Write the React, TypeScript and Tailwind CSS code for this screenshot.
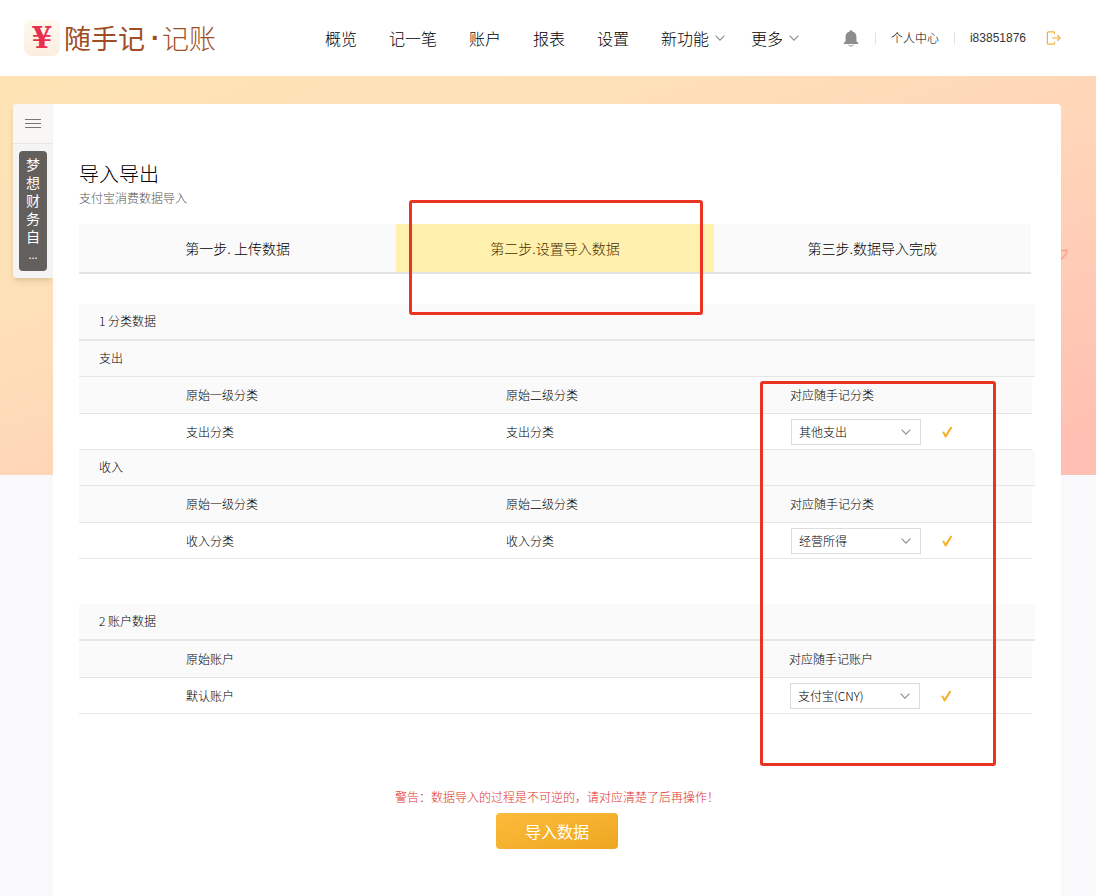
import { useState } from "react";
import type { ReactNode } from "react";

interface NavItem {
  label: string;
  more?: boolean;
}

const navItems: NavItem[] = [
  { label: "概览" },
  { label: "记一笔" },
  { label: "账户" },
  { label: "报表" },
  { label: "设置" },
  { label: "新功能", more: true },
  { label: "更多", more: true },
];

const steps = ["第一步. 上传数据", "第二步.设置导入数据", "第三步.数据导入完成"];
const activeStep = 1;

function Chevron({ className }: { className?: string }) {
  return (
    <svg viewBox="0 0 10 6" className={className} fill="none" stroke="#8c8c8c" strokeWidth="1.1" aria-hidden="true">
      <path d="M0.6 0.7 5 5.1 9.4 0.7" />
    </svg>
  );
}

function CheckMark() {
  return (
    <svg viewBox="0 0 12 12" className="h-3 w-3" aria-hidden="true">
      <path d="M1.2 6 3 5.4 4.6 8.2 9.6 0.6 11 0.9 10.8 2.4 5.2 11.4 4 11.6Z" fill="#f5b12c" />
    </svg>
  );
}

function Header() {
  return (
    <header className="flex h-[76px] shrink-0 items-center bg-white pl-6 pr-[35px]">
      <a href="#" className="flex h-9 w-[301px] items-center whitespace-nowrap">
        <span className="flex h-9 w-9 items-center justify-center rounded-lg bg-gradient-to-b from-[#fff9f0] to-[#fbeee0] font-['DejaVu_Serif',serif] text-[30px] leading-9 font-bold text-[#e8304c]">
          ¥
        </span>
        <span className="ml-1 text-[27px] leading-9 font-normal text-[#a04f24]">随手记</span>
        <span className="ml-1.5 font-['Liberation_Sans',sans-serif] text-[27px] leading-9 font-bold text-[#a04f24]">·</span>
        <span className="ml-0.5 text-[27px] leading-9 font-light text-[#a04f24]">记账</span>
      </a>

      <nav className="flex items-center gap-8 whitespace-nowrap">
        {navItems.map((item) => (
          <a key={item.label} href="#" className="flex items-center text-base">
            {item.label}
            {item.more && <Chevron className="-mr-1.5 ml-1.5 h-1.5 w-2.5" />}
          </a>
        ))}
      </nav>

      <div className="ml-auto flex items-center whitespace-nowrap text-xs">
        <button type="button" aria-label="消息" className="mr-4">
          <svg viewBox="0 0 16 17" className="h-[17px] w-4" aria-hidden="true">
            <path
              d="M8 0.3c-.8 0-1.3.5-1.4 1.1C4 2 2.6 4 2.6 6.6v3.6c0 1.2-.7 1.9-1.7 2.6-.5.4-.4 1.1.3 1.1h13.6c.7 0 .8-.7.3-1.1-1-.7-1.7-1.4-1.7-2.6V6.6C13.4 4 12 2 9.4 1.4 9.3.8 8.8.3 8 .3Z"
              fill="#8d8d8d"
            />
            <path d="M5.4 14.6a2.7 2 0 0 0 5.2 0" fill="none" stroke="#8d8d8d" strokeWidth="1" />
          </svg>
        </button>
        <a href="#" className="border-x border-[#e2e2e2] px-[15px] leading-3">
          个人中心
        </a>
        <a href="#" className="ml-[15px] font-['Liberation_Sans',sans-serif] text-[#333]">
          i83851876
        </a>
        <button type="button" aria-label="退出" className="ml-5">
          <svg viewBox="0 0 15 14" className="h-3.5 w-[15px]" fill="none" stroke="#f0b23c" strokeWidth="1.2" aria-hidden="true">
            <path d="M8.5 3.2V1.7a.9.9 0 0 0-.9-.9H2.3a.9.9 0 0 0-.9.9v10.6c0 .5.4.9.9.9h5.3c.5 0 .9-.4.9-.9v-1.5" />
            <path d="M6 7h8.2M11.2 4.2 14.2 7l-3 2.8" />
          </svg>
        </button>
      </div>
    </header>
  );
}

function SideBar() {
  return (
    <aside className="flex w-10 shrink-0 flex-col self-start rounded-l bg-[#f4f4f4] shadow-md">
      <button
        type="button"
        aria-label="菜单"
        className="flex h-10 flex-col items-center justify-center gap-[3px] rounded-tl border-b border-[#e6e6e6] bg-[#f8f7f6]"
      >
        <span className="h-px w-4 bg-[#777]" />
        <span className="h-px w-4 bg-[#777]" />
        <span className="h-px w-4 bg-[#777]" />
      </button>
      <div className="px-1.5 py-[7px]">
        <p className="flex h-[120px] flex-col items-center rounded-sm bg-[#635f5d] pt-1 text-sm leading-[18px] font-normal text-white">
          {"梦想财务自".split("").map((char) => (
            <span key={char}>{char}</span>
          ))}
          <span className="text-[11px]">...</span>
        </p>
      </div>
    </aside>
  );
}

function SectionTitle({ children }: { children: ReactNode }) {
  return <h2 className="h-[37px] border-b-2 border-[#e6e6e6] bg-[#fafafa] pl-5 leading-[34px]">{children}</h2>;
}

function GroupTitle({ children }: { children: ReactNode }) {
  return <h3 className="h-9 border-b border-[#e6e6e6] bg-[#fafafa] pl-5 leading-[34px]">{children}</h3>;
}

interface MappingTableProps {
  headers: string[];
  cells: string[];
  target: string;
  options: string[];
}

function MappingTable({ headers, cells, target, options }: MappingTableProps) {
  const [value, setValue] = useState(options[0]);
  const wide = headers.length === 1;

  return (
    <div className="pr-[3px]">
      <table className="w-full table-fixed border-separate border-spacing-0 text-left">
        <thead>
          <tr className="h-[37px] bg-[#fafafa]">
            {headers.map((header, i) => (
              <th
                key={header}
                className={`border-b border-[#e6e6e6] p-0 font-light ${
                  wide ? "w-[710px] pl-[107px]" : i === 0 ? "w-[427px] pl-[107px]" : "w-[284px]"
                }`}
              >
                {header}
              </th>
            ))}
            <th className="border-b border-[#e6e6e6] p-0 font-light">{target}</th>
          </tr>
        </thead>
        <tbody>
          <tr className="h-9">
            {cells.map((cell, i) => (
              <td key={i} className={i === 0 ? "border-b border-[#e6e6e6] pl-[107px]" : "border-b border-[#e6e6e6]"}>
                {cell}
              </td>
            ))}
            <td className="border-b border-[#e6e6e6] pl-px">
              <div className="flex items-center gap-5">
                <div className="relative">
                  <select
                    aria-label={target}
                    value={value}
                    onChange={(e) => setValue(e.target.value)}
                    className="block h-[26px] w-[130px] appearance-none border border-[#dcdcdc] bg-white px-[7px]"
                  >
                    {options.map((option) => (
                      <option key={option}>{option}</option>
                    ))}
                  </select>
                  <Chevron className="pointer-events-none absolute top-2.5 right-2.5 h-1.5 w-2.5" />
                </div>
                <CheckMark />
              </div>
            </td>
          </tr>
        </tbody>
      </table>
    </div>
  );
}

export default function App() {
  return (
    <div className="flex min-h-screen flex-col bg-[#f9f9fc] font-['Noto_Sans_CJK_SC',sans-serif] font-light text-black">
      <Header />

      <main className="relative flex flex-1 bg-[linear-gradient(160deg,#fee4b5_0%,#fee0b8_30%,#ffd3b8_60%,#ffbfb2_95%)] bg-[length:100%_399px] bg-no-repeat pt-7 pr-[35px] pl-[13px]">
        <svg
          viewBox="0 0 7 12"
          className="absolute top-[173px] right-7 h-3 w-[7px]"
          fill="none"
          stroke="#fb9c90"
          strokeWidth="1.4"
          aria-hidden="true"
        >
          <path d="M0 1.8 6 1.2 5 5.2 0 10.6" />
        </svg>
        <SideBar />

        <div className="min-w-0 flex-1 rounded-tr bg-white px-[26px] pt-14 pb-12 text-xs">
          <h1 className="text-xl leading-7">导入导出</h1>
          <p className="text-xs leading-5 text-[#555]">支付宝消费数据导入</p>

          <ol className="mt-4 mr-1 grid grid-cols-3 border-b-2 border-[#e3e3e3] bg-[#fafafa] text-center text-sm leading-[48px]">
            {steps.map((step, i) => (
              <li key={step} className={i === activeStep ? "relative bg-[#fff0ae] text-[#4a2f00]" : ""}>
                {step}
                {i === activeStep && (
                  <span className="pointer-events-none absolute -top-6 right-[11px] -bottom-[43px] left-[13px] z-10 rounded-[3px] border-3 border-[#e93323]" />
                )}
              </li>
            ))}
          </ol>

          <div className="relative mt-[30px]">
            <section>
              <SectionTitle>1 分类数据</SectionTitle>
              <GroupTitle>支出</GroupTitle>
              <MappingTable
                headers={["原始一级分类", "原始二级分类"]}
                cells={["支出分类", "支出分类"]}
                target="对应随手记分类"
                options={["其他支出"]}
              />
              <GroupTitle>收入</GroupTitle>
              <MappingTable
                headers={["原始一级分类", "原始二级分类"]}
                cells={["收入分类", "收入分类"]}
                target="对应随手记分类"
                options={["经营所得"]}
              />
            </section>

            <section className="mt-[45px]">
              <SectionTitle>2 账户数据</SectionTitle>
              <MappingTable
                headers={["原始账户"]}
                cells={["默认账户"]}
                target="对应随手记账户"
                options={["支付宝(CNY)"]}
              />
            </section>

            <span className="pointer-events-none absolute top-[77px] right-[39px] -bottom-[52px] w-[236px] rounded-[3px] border-3 border-[#e93323]" />
          </div>

          <div className="mt-[73px] flex flex-col items-center">
            <p className="leading-5 text-[#e0322c]">警告：数据导入的过程是不可逆的，请对应清楚了后再操作！</p>
            <button
              type="button"
              className="mt-1.5 h-9 w-[122px] rounded-sm bg-gradient-to-br from-[#fdbb3b] to-[#eda61f] text-base font-normal text-white"
            >
              导入数据
            </button>
          </div>
        </div>
      </main>
    </div>
  );
}
